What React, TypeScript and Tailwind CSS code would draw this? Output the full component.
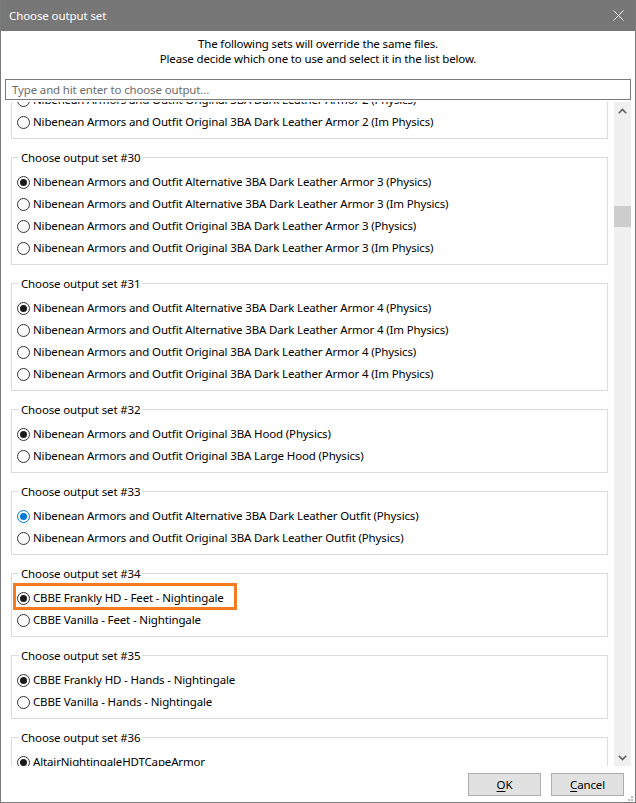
import type { ReactNode } from 'react'

type Group = {
  n: number
  items: string[]
  checked: number
  blue?: boolean
  marked?: number
}

const NA = 'Nibenean Armors and Outfit'

const armorSet = (n: number, k: number): Group => ({
  n,
  checked: 0,
  items: [
    `${NA} Alternative 3BA Dark Leather Armor ${k} (Physics)`,
    `${NA} Alternative 3BA Dark Leather Armor ${k} (Im Physics)`,
    `${NA} Original 3BA Dark Leather Armor ${k} (Physics)`,
    `${NA} Original 3BA Dark Leather Armor ${k} (Im Physics)`,
  ],
})

const groups: Group[] = [
  armorSet(29, 2),
  armorSet(30, 3),
  armorSet(31, 4),
  {
    n: 32,
    checked: 0,
    items: [`${NA} Original 3BA Hood (Physics)`, `${NA} Original 3BA Large Hood (Physics)`],
  },
  {
    n: 33,
    checked: 0,
    blue: true,
    items: [
      `${NA} Alternative 3BA Dark Leather Outfit (Physics)`,
      `${NA} Original 3BA Dark Leather Outfit (Physics)`,
    ],
  },
  {
    n: 34,
    checked: 0,
    marked: 0,
    items: ['CBBE Frankly HD - Feet - Nightingale', 'CBBE Vanilla - Feet - Nightingale'],
  },
  {
    n: 35,
    checked: 0,
    items: ['CBBE Frankly HD - Hands - Nightingale', 'CBBE Vanilla - Hands - Nightingale'],
  },
  {
    n: 36,
    checked: 0,
    items: ['AltairNightingaleHDTCapeArmor', 'NightingaleArmorHDT'],
  },
]

function Radio({ on, blue }: { on: boolean; blue?: boolean }) {
  return (
    <span
      className={
        'flex h-[13px] w-[13px] shrink-0 items-center justify-center rounded-full border bg-white ' +
        (on && blue ? 'border-[#0078d7]' : 'border-[#333333]')
      }
    >
      {on && (
        <span className={'h-[7px] w-[7px] rounded-full ' + (blue ? 'bg-[#0078d7]' : 'bg-[#1a1a1a]')} />
      )}
    </span>
  )
}

function Option({ label, on, blue, marked }: { label: string; on: boolean; blue?: boolean; marked?: boolean }) {
  return (
    <div className="relative flex h-[22px] items-center gap-[3px] pl-[5px]">
      <Radio on={on} blue={blue} />
      <span className="whitespace-nowrap">{label}</span>
      {marked && (
        <div className="pointer-events-none absolute left-[1px] top-[-4px] h-[27px] w-[224px] border-[3px] border-[#f47b20]" />
      )}
    </div>
  )
}

function GroupBox({ g }: { g: Group }) {
  return (
    <div className="relative border border-[#dcdcdc] pb-[5px] pt-[13px]">
      <span className="absolute left-[7px] top-[-8px] bg-white px-[2px] leading-[15px]">
        Choose output set #{g.n}
      </span>
      {g.items.map((it, i) => (
        <Option key={it} label={it} on={i === g.checked} blue={g.blue} marked={g.marked === i} />
      ))}
    </div>
  )
}

function Chevron({ up }: { up?: boolean }) {
  return (
    <svg width="9" height="6" viewBox="0 0 9 6" className={up ? '' : 'rotate-180'}>
      <path d="M0.8 5.2 L4.5 1.5 L8.2 5.2" fill="none" stroke="#606060" strokeWidth="1.6" />
    </svg>
  )
}

function Btn({ children }: { children: ReactNode }) {
  return (
    <button className="flex h-[23px] w-[73px] items-center justify-center border border-[#adadad] bg-[#e1e1e1] text-black">
      {children}
    </button>
  )
}

export default function App() {
  return (
    <div className="flex h-[803px] w-[636px] flex-col overflow-hidden border-x border-b border-[#7a7a7a] bg-white font-['Noto_Sans','DejaVu_Sans',sans-serif] text-[11.5px] tracking-[-0.15px] text-black">
      {/* title bar */}
      <div className="-mx-px flex h-[31px] shrink-0 items-center justify-between bg-[#777777] pl-[9px] pr-[12px] text-white">
        <span className="text-[11.5px] tracking-[-0.1px]">Choose output set</span>
        <svg width="11" height="11" viewBox="0 0 11 11">
          <path d="M0.5 0.5 L10.5 10.5 M10.5 0.5 L0.5 10.5" stroke="#fff" strokeWidth="1" />
        </svg>
      </div>

      {/* header */}
      <div className="mt-[5px] text-center leading-[15px]">
        <div>The following sets will override the same files.</div>
        <div>Please decide which one to use and select it in the list below.</div>
      </div>

      <div className="mx-[4px] mt-[13px] flex h-[21px] shrink-0 items-center border border-[#7a7a7a] pl-[6px] text-[#6d6d6d]">
        Type and hit enter to choose output...
      </div>

      {/* list */}
      <div className="mx-[4px] mt-[2px] flex h-[664px] shrink-0 overflow-hidden">
        <div className="flex-1 overflow-hidden px-[6px]">
          <div className="-mt-[71px] flex flex-col gap-[18px]">
            {groups.map((g) => (
              <GroupBox key={g.n} g={g} />
            ))}
          </div>
        </div>
        <div className="flex w-[17px] flex-col bg-[#f0f0f0]">
          <div className="flex h-[17px] items-center justify-center">
            <Chevron up />
          </div>
          <div className="mt-[87px] h-[21px] bg-[#cdcdcd]" />
          <div className="flex-1" />
          <div className="flex h-[17px] items-center justify-center">
            <Chevron />
          </div>
        </div>
      </div>

      {/* buttons */}
      <div className="mt-[7px] flex shrink-0 items-start justify-end gap-[10px] pr-[11px]">
        <Btn>
          <span className="underline underline-offset-2">O</span>K
        </Btn>
        <Btn>
          <span className="underline underline-offset-2">C</span>ancel
        </Btn>
      </div>
      <div className="flex flex-1 items-end justify-end pb-[2px] pr-[2px]">
        <svg width="8" height="8" viewBox="0 0 8 8">
          {[
            [6, 0],
            [3, 3],
            [6, 3],
            [0, 6],
            [3, 6],
            [6, 6],
          ].map(([x, y]) => (
            <rect key={`${x}-${y}`} x={x} y={y} width="2" height="2" fill="#b8b8b8" />
          ))}
        </svg>
      </div>
    </div>
  )
}
